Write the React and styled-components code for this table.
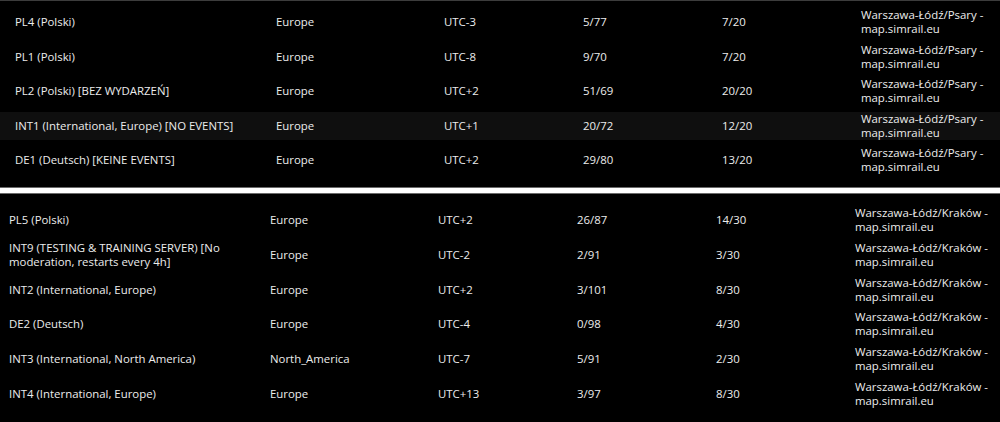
import React from "react";
import styled, { createGlobalStyle } from "styled-components";

const Global = createGlobalStyle`
  html, body { margin: 0; padding: 0; background: #000; }
  body { font-family: "Open Sans", "Noto Sans", sans-serif; }
`;

const Page = styled.div`
  width: 1000px;
  height: 422px;
  background: #000;
  border-top: 1px solid #3c3c3c;
  box-sizing: border-box;
  overflow: hidden;
`;

const Table = styled.div`
  display: flex;
  flex-direction: column;
  gap: ${(p) => p.$gap}px;
  padding: ${(p) => p.$pt}px 0 ${(p) => p.$pb}px ${(p) => p.$pl}px;
`;

const Row = styled.div`
  display: grid;
  grid-template-columns: 261px 168px 139px 139px 139px 142px;
  align-items: center;
  min-height: 28px;
  margin-left: ${(p) => -p.$pl}px;
  padding-left: ${(p) => p.$pl}px;
  background: ${(p) => (p.$hl ? "#0f0f0f" : "transparent")};
`;

const Cell = styled.div`
  color: #ececec;
  font-size: 11.4px;
  font-weight: 500;
  line-height: 14px;
  padding-right: ${(p) => (p.$wide ? "28px" : "0")};
`;

const Separator = styled.div`
  height: 5px;
  background: #fff;
  border-top: 1px solid #6a6a6a;
  border-bottom: 1px solid #6a6a6a;
`;

const top = [
  ["PL4 (Polski)", "Europe", "UTC-3", "5/77", "7/20", "Warszawa-Łódź/Psary - map.simrail.eu"],
  ["PL1 (Polski)", "Europe", "UTC-8", "9/70", "7/20", "Warszawa-Łódź/Psary - map.simrail.eu"],
  ["PL2 (Polski) [BEZ WYDARZEŃ]", "Europe", "UTC+2", "51/69", "20/20", "Warszawa-Łódź/Psary - map.simrail.eu"],
  ["INT1 (International, Europe) [NO EVENTS]", "Europe", "UTC+1", "20/72", "12/20", "Warszawa-Łódź/Psary - map.simrail.eu", true],
  ["DE1 (Deutsch) [KEINE EVENTS]", "Europe", "UTC+2", "29/80", "13/20", "Warszawa-Łódź/Psary - map.simrail.eu"],
];

const bottom = [
  ["PL5 (Polski)", "Europe", "UTC+2", "26/87", "14/30", "Warszawa-Łódź/Kraków - map.simrail.eu"],
  ["INT9 (TESTING & TRAINING SERVER) [No moderation, restarts every 4h]", "Europe", "UTC-2", "2/91", "3/30", "Warszawa-Łódź/Kraków - map.simrail.eu"],
  ["INT2 (International, Europe)", "Europe", "UTC+2", "3/101", "8/30", "Warszawa-Łódź/Kraków - map.simrail.eu"],
  ["DE2 (Deutsch)", "Europe", "UTC-4", "0/98", "4/30", "Warszawa-Łódź/Kraków - map.simrail.eu"],
  ["INT3 (International, North America)", "North_America", "UTC-7", "5/91", "2/30", "Warszawa-Łódź/Kraków - map.simrail.eu"],
  ["INT4 (International, Europe)", "Europe", "UTC+13", "3/97", "8/30", "Warszawa-Łódź/Kraków - map.simrail.eu"],
];

function ServerTable({ rows, pl, pt, pb, gap }) {
  return (
    <Table $pl={pl} $pt={pt} $pb={pb} $gap={gap}>
      {rows.map((r, i) => (
        <Row key={i} $hl={r[6]} $pl={pl}>
          <Cell $wide>{r[0]}</Cell>
          <Cell>{r[1]}</Cell>
          <Cell>{r[2]}</Cell>
          <Cell>{r[3]}</Cell>
          <Cell>{r[4]}</Cell>
          <Cell>{r[5]}</Cell>
        </Row>
      ))}
    </Table>
  );
}

export default function App() {
  return (
    <Page>
      <Global />
      <ServerTable rows={top} pl={15} pt={7} pb={13} gap={6.5} />
      <Separator />
      <ServerTable rows={bottom} pl={9} pt={12} pb={14} gap={6.8} />
    </Page>
  );
}
